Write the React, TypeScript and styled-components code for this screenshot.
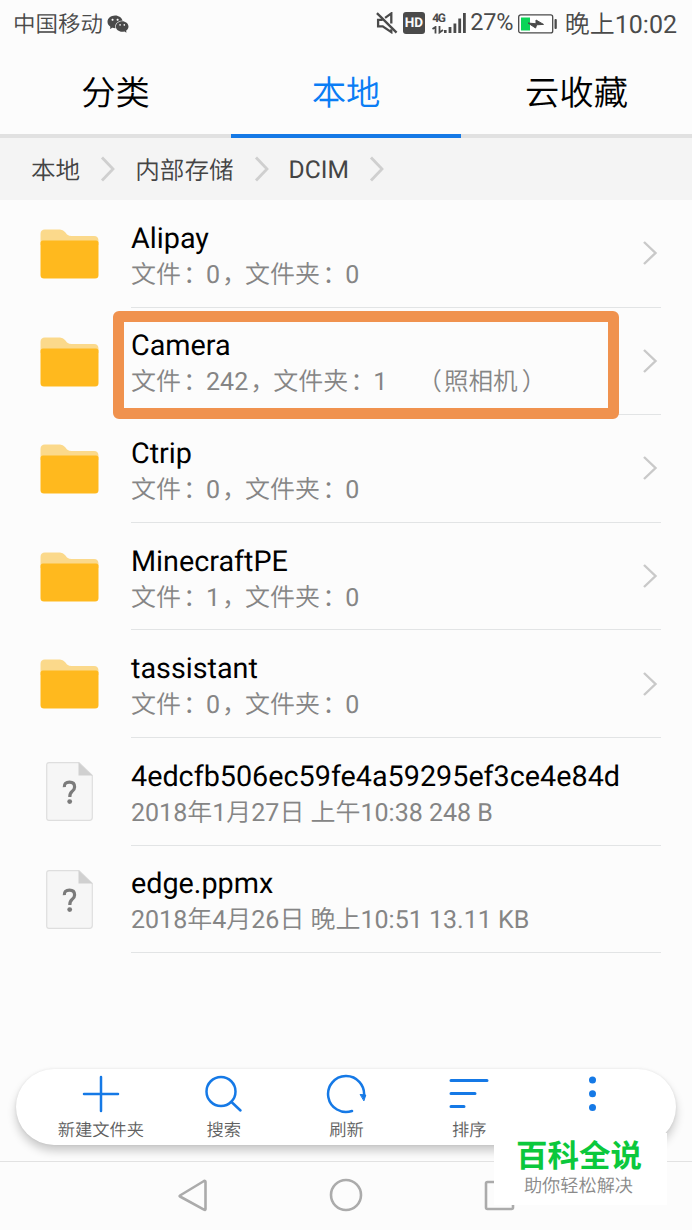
import React from 'react';
import styled, { createGlobalStyle } from 'styled-components';
import { AiFillWechat } from 'react-icons/ai';

const Global = createGlobalStyle`
  * { box-sizing: border-box; }
  body {
    margin: 0;
    background: #fcfcfc;
    font-family: Roboto, 'Noto Sans CJK SC', sans-serif;
    font-weight: 400;
    text-rendering: geometricPrecision;
  }
  svg { display: block; flex: none; }
`;

const Screen = styled.div`
  position: relative;
  display: flex;
  flex-direction: column;
  width: 692px;
  height: 1230px;
  overflow: hidden;
  background: #fcfcfc;
`;

const StatusBar = styled.header`
  display: flex;
  align-items: center;
  height: 48px;
  padding: 0 15px 0 13px;
  color: #4a4a4a;
  font-weight: 350;
`;

const Carrier = styled.span`
  margin: -2px 3px 0 0;
  font-size: 22.5px;
`;

const StatusRight = styled.div`
  display: flex;
  align-items: center;
  margin-left: auto;
`;

const MuteIcon = styled.svg`
  margin-top: -2px;
`;

const HdBadge = styled.span`
  width: 21.5px;
  height: 22px;
  margin: -2px 0 0 5px;
  border-radius: 3px;
  background: #4a4a4a;
  color: #fcfcfc;
  font-size: 13.5px;
  font-weight: 700;
  line-height: 23px;
  text-align: center;
`;

const Signal = styled.div`
  display: flex;
  align-items: flex-end;
  width: 35px;
  height: 22px;
  margin: -3px 0 0 7.5px;
`;

const Network = styled.div`
  display: flex;
  flex-direction: column;
  justify-content: space-between;
  width: 12px;
  height: 22px;
  font-size: 12px;
  font-weight: 700;
  line-height: 12px;
  letter-spacing: -1.4px;
`;

const Percent = styled.span`
  width: 42px;
  margin: -4px 6px 0 3px;
  font-size: 23.5px;
  font-weight: 400;
  letter-spacing: -0.2px;
`;

const Clock = styled.span`
  margin: -3px 0 0 6.5px;
  font-size: 25px;
  white-space: nowrap;
`;

const Tabs = styled.nav`
  display: grid;
  grid-template-columns: 231px 230px 231px;
  height: 90px;
`;

const Tab = styled.div<{ $active?: boolean }>`
  display: flex;
  align-items: center;
  justify-content: center;
  padding-bottom: 2px;
  border-bottom: 4px solid ${p => (p.$active ? '#1579e6' : '#e1e1e1')};
  color: ${p => (p.$active ? '#0a7df5' : '#000')};
  font-size: 34.3px;
  font-weight: 350;
`;

const Breadcrumb = styled.div`
  display: flex;
  align-items: center;
  height: 62px;
  padding-left: 31px;
  background: #f4f4f4;
  color: #444;
  font-size: 24.6px;
`;

const Crumb = styled.span<{ $cjk?: boolean }>`
  margin-top: ${p => (p.$cjk ? '0' : '2px')};
  font-weight: ${p => (p.$cjk ? 350 : 400)};
`;

const CrumbArrow = styled.svg`
  margin: 0 20px 0 20px;
`;

const List = styled.main`
  display: flex;
  flex-direction: column;
  flex: 1;
`;

const Row = styled.div`
  position: relative;
  display: flex;
  height: 107.6px;
  padding-right: 31px;
`;

const IconCell = styled.div<{ $file?: boolean }>`
  width: 131px;
  padding: ${p => (p.$file ? '24px 0 0 46px' : '29px 0 0 40px')};
`;

const RowBody = styled.div`
  display: flex;
  flex: 1;
  align-items: center;
  justify-content: space-between;
  border-bottom: 1.5px solid #e2e4e5;
`;

const Name = styled.div`
  padding-top: 8px;
  color: #000;
  font-size: 28.75px;
  line-height: 36px;
  white-space: nowrap;
`;

const Detail = styled.div`
  color: #858585;
  font-size: 25px;
  font-weight: 350;
  line-height: 37px;
  white-space: pre;
`;

const Latin = styled.span`
  font-weight: 400;
`;

const Punct = styled.span<{ $shift?: number }>`
  padding-left: ${p => p.$shift ?? 2}px;
  margin-right: -${p => p.$shift ?? 2}px;
`;

const Note = styled.span`
  margin-left: 30px;
  font-size: 24.6px;
`;

const NoteText = styled.span`
  margin-left: 2px;
`;

const Highlight = styled.div`
  position: absolute;
  left: 113px;
  top: 3px;
  width: 506px;
  height: 108.5px;
  border: 11.3px solid #f0924e;
  border-radius: 6px;
`;

const Toolbar = styled.div`
  display: flex;
  height: 76px;
  margin: 0 16px 16px;
  padding: 0 23px;
  border-radius: 38px;
  background: #fff;
  box-shadow: 0 6px 10px rgba(0, 0, 0, 0.2), 0 0 3px rgba(0, 0, 0, 0.08);
`;

const Tool = styled.div`
  display: flex;
  flex-direction: column;
  align-items: center;
  width: 123px;
  padding: 4px 0 0 1px;
  color: #606060;
  font-size: 17.3px;
  font-weight: 350;
  line-height: 24px;
  white-space: nowrap;
`;

const ToolIcon = styled.svg`
  width: 42px;
  height: 42px;
  margin-bottom: 3.5px;
  fill: none;
  stroke: #1579e6;
  stroke-width: 2.5;
  stroke-linecap: round;
`;

const NavBar = styled.footer`
  display: flex;
  align-items: flex-start;
  justify-content: center;
  gap: 119px;
  height: 69px;
  padding-top: 16px;
  border-top: 1.5px solid #e2e2e2;
`;

const NavIcon = styled.svg`
  width: 34px;
  height: 34px;
  fill: none;
  stroke: #ababab;
  stroke-width: 2.6;
  stroke-linejoin: round;
`;

const Watermark = styled.aside`
  position: absolute;
  left: 494px;
  top: 1133px;
  width: 173px;
  height: 72px;
  padding-top: 5px;
  background: #fff;
  text-align: center;
`;

const Brand = styled.div`
  margin-left: -3px;
  color: #0bc83c;
  font-size: 31.5px;
  font-weight: 700;
  line-height: 38px;
`;

const Slogan = styled.div`
  margin-left: -4px;
  color: #8a8a8a;
  font-size: 18.2px;
  font-weight: 350;
  line-height: 22px;
`;

const Chevron = () => (
  <CrumbArrow width="15" height="26" fill="none" stroke="#cfcfcf" strokeWidth="2.8">
    <path d="M2 1.5 13 13 2 24.5" />
  </CrumbArrow>
);

const RowChevron = () => (
  <svg width="18" height="26" fill="none" stroke="#c9c9c9" strokeWidth="2.4">
    <path d="M1 2 12.5 13 1 24" />
  </svg>
);

const Folder = () => (
  <svg width="59" height="50" viewBox="0 0 59 50">
    <path d="M0.5 14V5Q0.5 0.5 5 0.5H20Q23 0.5 25 3L27 5.5Q29 7 32 7H54Q58.5 7 58.5 12V16H0.5Z" fill="#fbd98b" />
    <path d="M0.5 14Q0.5 11.5 3 11.5H56Q58.5 11.5 58.5 14V46Q58.5 49.5 55 49.5H4Q0.5 49.5 0.5 46Z" fill="#ffb91e" />
  </svg>
);

const UnknownFile = () => (
  <svg width="47" height="59" viewBox="0 0 47 59">
    <path d="M3 0.7H33L46.3 13.5V55.5Q46.3 58.3 43.5 58.3H3Q0.7 58.3 0.7 56V3Q0.7 0.7 3 0.7Z" fill="#f6f6f6" stroke="#dedede" strokeWidth="1.2" />
    <path d="M32.5 0.5V13.5H46.5Z" fill="#d0d0d0" />
    <path d="M18.3 25.2Q18 20.2 23.5 20.2Q28.6 20.2 28.6 25Q28.6 27.6 26 29.6Q23.8 31.4 23.8 35" fill="none" stroke="#7b7b7b" strokeWidth="3.2" />
    <circle cx="23.7" cy="39.6" r="2.4" fill="#7b7b7b" />
  </svg>
);

type Entry = {
  name: string;
  files?: number;
  folders?: number;
  note?: string;
  info?: [string, boolean][];
  marked?: boolean;
};

const entries: Entry[] = [
  { name: 'Alipay', files: 0, folders: 0 },
  { name: 'Camera', files: 242, folders: 1, note: '照相机', marked: true },
  { name: 'Ctrip', files: 0, folders: 0 },
  { name: 'MinecraftPE', files: 1, folders: 0 },
  { name: 'tassistant', files: 0, folders: 0 },
  { name: '4edcfb506ec59fe4a59295ef3ce4e84d', info: [['2018', true], ['年', false], ['1', true], ['月', false], ['27', true], ['日 上午', false], ['10:38 248 B', true]] },
  { name: 'edge.ppmx', info: [['2018', true], ['年', false], ['4', true], ['月', false], ['26', true], ['日 晚上', false], ['10:51 13.11 KB', true]] },
];

const EntryRow = ({ entry }: { entry: Entry }) => (
  <Row>
    <IconCell $file={!!entry.info}>{entry.info ? <UnknownFile /> : <Folder />}</IconCell>
    <RowBody>
      <div>
        <Name>{entry.name}</Name>
        <Detail>
          {entry.info ? (
            entry.info.map(([text, latin], i) => (latin ? <Latin key={i}>{text}</Latin> : <span key={i}>{text}</span>))
          ) : (
            <>
              文件<Punct>：</Punct><Latin>{entry.files}</Latin><Punct>，</Punct>
              文件夹<Punct>：</Punct><Latin>{entry.folders}</Latin>
              {entry.note && <Note>（<NoteText>{entry.note}</NoteText><Punct $shift={4}>）</Punct></Note>}
            </>
          )}
        </Detail>
      </div>
      {!entry.info && <RowChevron />}
    </RowBody>
    {entry.marked && <Highlight />}
  </Row>
);

export default function App() {
  return (
    <>
      <Global />
      <Screen>
        <StatusBar>
          <Carrier>中国移动</Carrier>
          <AiFillWechat size={24} />
          <StatusRight>
            <MuteIcon width="22" height="22" viewBox="0 0 23 23" fill="none" stroke="#4a4a4a" strokeWidth="2.4">
              <path d="M7 8.2H2.2V15H7L16 21V18M9.5 6.2 16 1.5V12" />
              <path d="M1 1.2 21.5 21.5" />
            </MuteIcon>
            <HdBadge>HD</HdBadge>
            <Signal>
              <Network>
                <span>4G</span>
                <svg width="12" height="8" fill="none" stroke="#4a4a4a" strokeWidth="1.8">
                  <path d="M0.5 3 3.5 1V7.5M7.5 0V6.5L11 4" />
                </svg>
              </Network>
              <svg width="23" height="22" fill="#4a4a4a">
                <path d="M0 18H2.6V21H0ZM4.6 15H7.4V21H4.6ZM9.5 11.5H12.3V21H9.5ZM14.3 6.5H17.1V21H14.3ZM19 1H21.8V21H19Z" />
              </svg>
            </Signal>
            <Percent>27%</Percent>
            <svg width="40" height="20" viewBox="0 0 40 20">
              <rect x="0.7" y="0.9" width="34" height="18" rx="2" fill="#fff" stroke="#4a4a4a" strokeWidth="1.3" />
              <rect x="3" y="3.5" width="9" height="13" fill="#0ad457" />
              <path d="M10 9 18 9.8 18 6 25.5 10.4 18.6 10.8 17.6 14Z" fill="#4a4a4a" stroke="#4a4a4a" strokeLinejoin="round" />
              <rect x="36.5" y="5" width="2.3" height="10" rx="1" fill="#4a4a4a" />
            </svg>
            <Clock>晚上<Latin>10:02</Latin></Clock>
          </StatusRight>
        </StatusBar>
        <Tabs>
          <Tab>分类</Tab>
          <Tab $active>本地</Tab>
          <Tab>云收藏</Tab>
        </Tabs>
        <Breadcrumb>
          <Crumb $cjk>本地</Crumb>
          <Chevron />
          <Crumb $cjk>内部存储</Crumb>
          <Chevron />
          <Crumb>DCIM</Crumb>
          <Chevron />
        </Breadcrumb>
        <List>
          {entries.map(entry => <EntryRow key={entry.name} entry={entry} />)}
        </List>
        <Toolbar>
          <Tool>
            <ToolIcon><path d="M21 4V38M4 21H38" /></ToolIcon>
            新建文件夹
          </Tool>
          <Tool>
            <ToolIcon><circle cx="18" cy="18.5" r="14.5" /><path d="M28.5 29 37.5 37.5" /></ToolIcon>
            搜索
          </Tool>
          <Tool>
            <ToolIcon>
              <path d="M27 38A18 18 0 1 1 38.9 23.5" />
              <path d="M35.5 21.5 40.8 22 39 27.5Z" fill="#1579e6" strokeWidth="1" />
            </ToolIcon>
            刷新
          </Tool>
          <Tool>
            <ToolIcon><path strokeWidth="3" d="M3 7.5H39M3 20.5H27M3 33.5H16" /></ToolIcon>
            排序
          </Tool>
          <Tool>
            <ToolIcon>
              <g fill="#1579e6" stroke="none">
                <circle cx="21.5" cy="7" r="3.5" />
                <circle cx="21.5" cy="20.8" r="3.5" />
                <circle cx="21.5" cy="34.6" r="3.5" />
              </g>
            </ToolIcon>
          </Tool>
        </Toolbar>
        <NavBar>
          <NavIcon><path d="M4 17.5 28 3Q29.5 2.5 29.5 4V31Q29.5 32.5 28 31.7L4 18.5Q3.2 18 4 17.5Z" /></NavIcon>
          <NavIcon><circle cx="17" cy="17" r="15" /></NavIcon>
          <NavIcon><rect x="4" y="4" width="27" height="27" rx="1.5" /></NavIcon>
        </NavBar>
        <Watermark>
          <Brand>百科全说</Brand>
          <Slogan>助你轻松解决</Slogan>
        </Watermark>
      </Screen>
    </>
  );
}
